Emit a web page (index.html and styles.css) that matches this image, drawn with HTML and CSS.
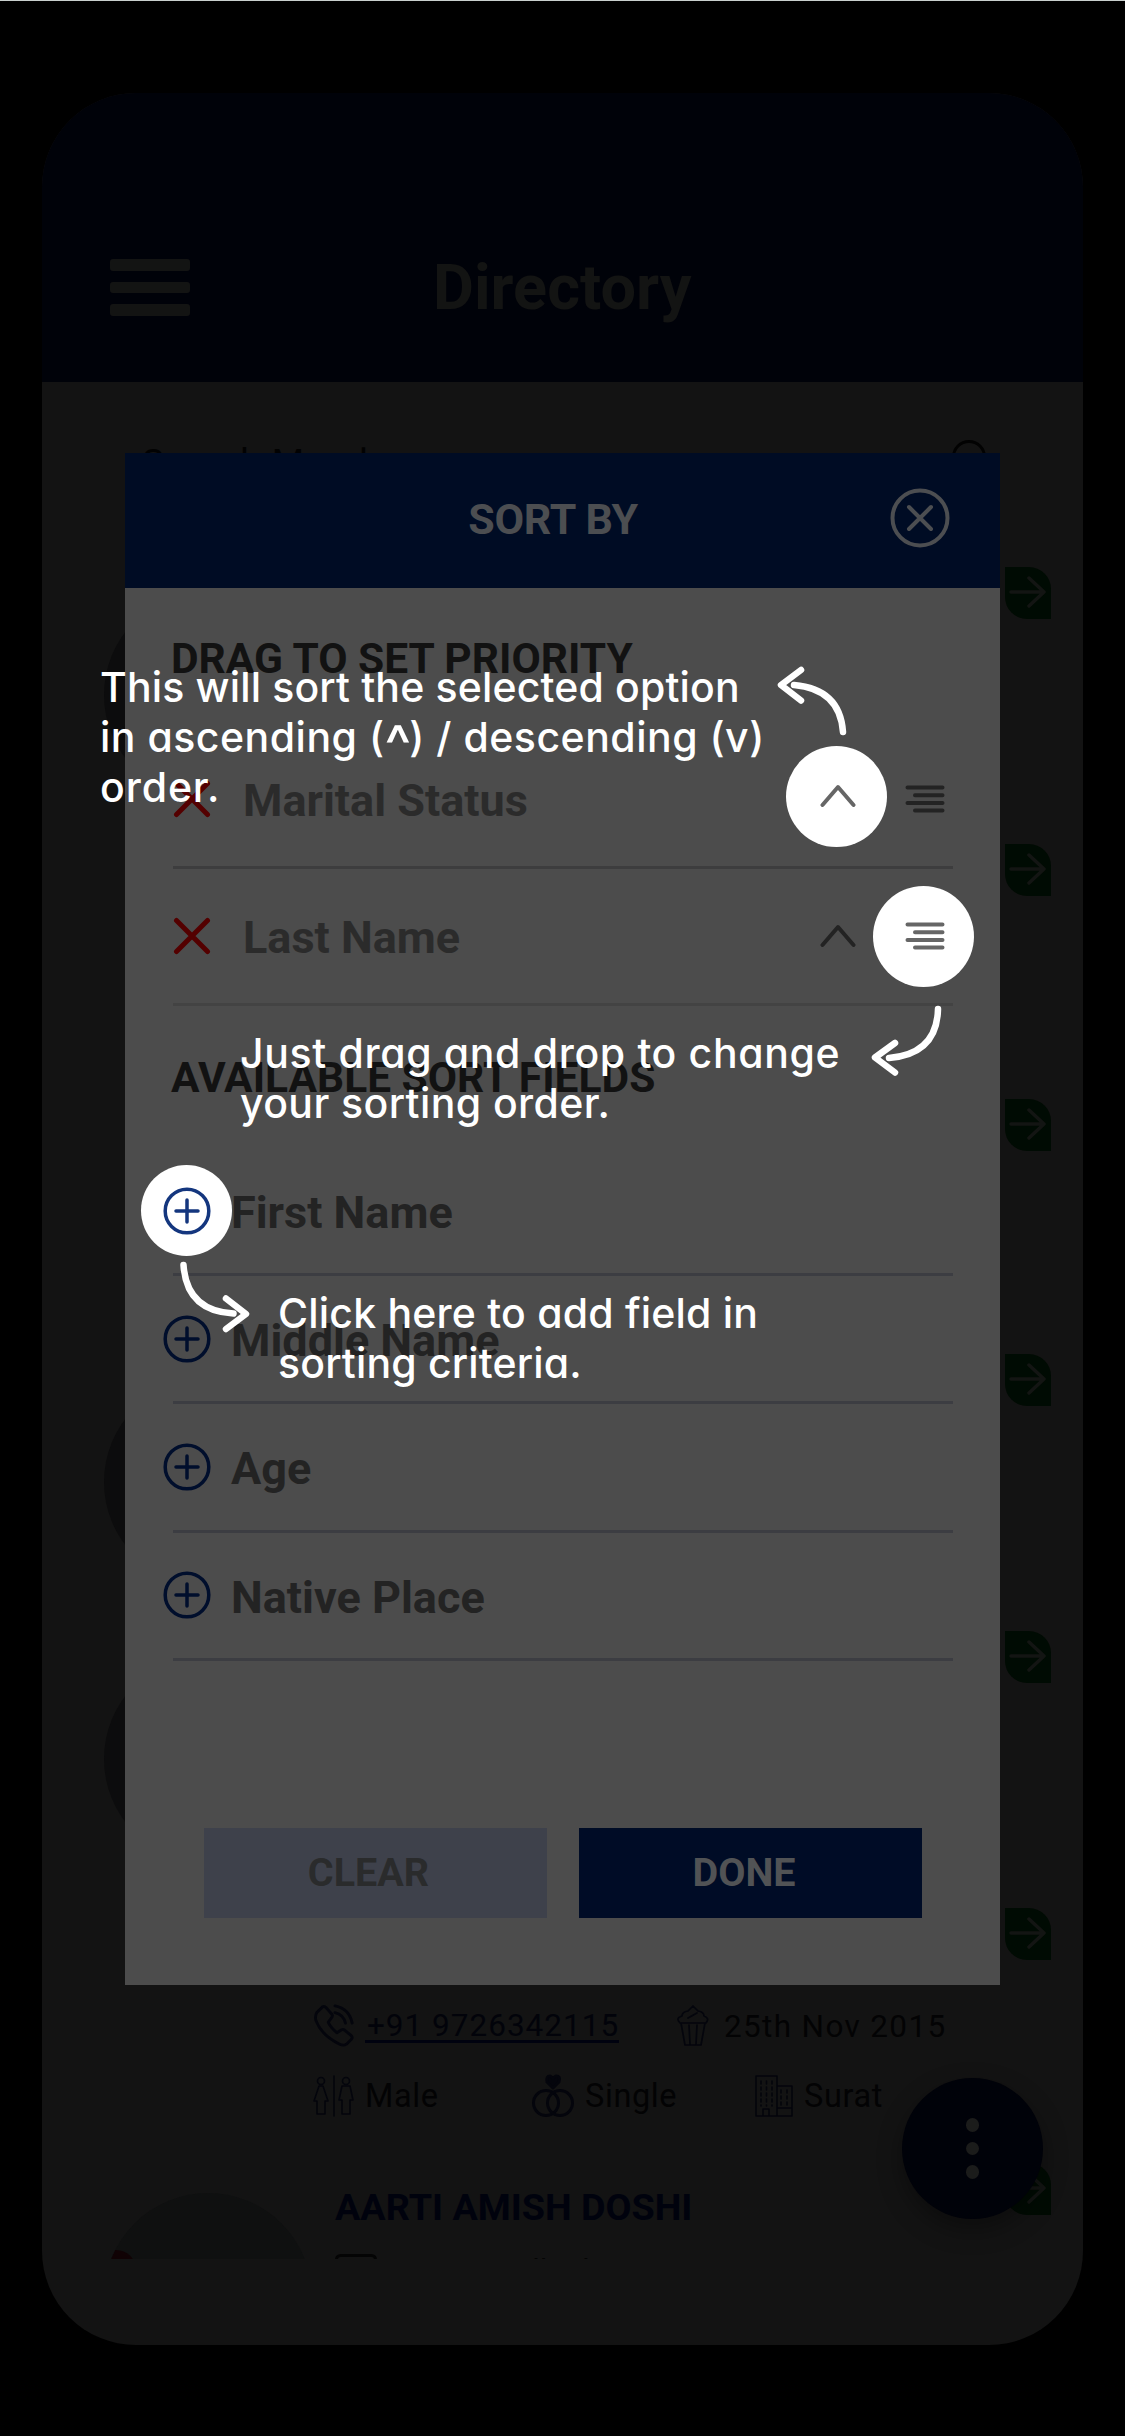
FILE: index.html
```html
<!DOCTYPE html>
<html lang="en">
<head>
<meta charset="utf-8">
<title>Directory - Sort by</title>
<link rel="stylesheet" href="styles.css">
</head>
<body>
<svg class="defs" aria-hidden="true">
  <symbol id="plus" viewBox="0 0 48 48"><circle cx="24" cy="24" r="21.8"/><path d="M24 13v22M13 24h22"/></symbol>
  <symbol id="cross" viewBox="0 0 38 38"><path d="M3.5 3.5l31 31M34.5 3.5l-31 31"/></symbol>
  <symbol id="up" viewBox="0 0 36 24"><path d="M2.5 21L18 3l15.500 18"/></symbol>
  <symbol id="lines" viewBox="0 0 40 28"><path d="M2.500 2.500h35M10 10.200h27.500M2.500 17.900h35M10 25.600h27.500"/></symbol>
  <symbol id="go" viewBox="0 0 46 52"><path d="M6 25h33M24 11l15 14-15 14"/></symbol>
</svg>
<div class="screen">
  <div class="phone">
    <header class="appbar">
      <span class="menu"><i></i><i></i><i></i></span>
      <h1>Directory</h1>
    </header>
    <div class="search"><span>Search Member</span>
      <svg class="glass" viewBox="0 0 42 42"><circle cx="18" cy="18" r="15.500"/><path d="M29 29l10 10"/></svg>
    </div>
    <main class="list">
      <section class="card"><span class="photo"></span><svg class="go"><use href="#go"/></svg></section>
      <section class="card short"><svg class="go"><use href="#go"/></svg></section>
      <section class="card short"><svg class="go"><use href="#go"/></svg></section>
      <section class="card"><span class="photo"></span><svg class="go"><use href="#go"/></svg></section>
      <section class="card"><span class="photo"></span><svg class="go"><use href="#go"/></svg></section>
      <section class="card short details">
        <svg class="go"><use href="#go"/></svg>
        <div class="row first">
          <svg class="ic" viewBox="0 0 42 46"><path d="M3 9l6-6q2-1 4 1l6 7q1 2-1 4l-3 4q2 5 9 11l5-3q2-1 4 1l6 5q2 2 0 4l-5 5q-3 2-7 0Q8 33 2 17q-1-5 1-8zM22 2q15 3 18 18M22 9q9 2 11 11"/></svg>
          <a class="tel">+91 9726342115</a>
          <svg class="ic cake" viewBox="0 0 34 42"><path d="M5 18l4 22h16l4-22M13 20l1 19M21 20l-1 19M4 18q-5-5 2-7 0-4 6-5l5-5 5 5q6 1 6 5 6 2 2 7zM12 13l9-5"/></svg>
          <span class="date">25th Nov 2015</span>
        </div>
        <div class="row second">
          <svg class="ic thin" viewBox="0 0 42 42"><circle cx="8" cy="6" r="3.500"/><path d="M6 11h4l5 15h-3v13H4V26H1zM21 1v40"/><circle cx="33" cy="6" r="3.500"/><path d="M29 11h8l3 14h-3v14h-8V25h-3z"/></svg>
          <span class="male">Male</span>
          <svg class="ic" viewBox="0 0 42 44"><circle cx="14" cy="29" r="12.500"/><circle cx="28" cy="29" r="12.500"/><path class="heart" d="M21 14l-6-6q-1-6 3-6l3 2 3-2q5 0 3 6z"/></svg>
          <span class="single">Single</span>
          <svg class="ic thin" viewBox="0 0 40 44"><path d="M2 42V2h21v40zM23 12h15v30H23M9 42v-7h6v7M23 34h15"/><path stroke-dasharray="3 3" d="M7 7v25M12.500 7v25M18 7v25M27 16v15M33 16v15"/></svg>
          <span class="city">Surat</span>
        </div>
      </section>
      <section class="card last">
        <svg class="go"><use href="#go"/></svg>
        <span class="photo"><i></i></span>
        <h2>AARTI AMISH DOSHI</h2>
        <div class="mail"><svg class="ic" viewBox="0 0 42 34"><rect x="1.500" y="1.500" width="39" height="30" rx="4"/></svg><span>aarti@swillindia.in</span></div>
      </section>
    </main>
    <span class="fab"><i></i><i></i><i></i></span>
  </div>

  <div class="modal">
    <header class="modal-head">
      <span>SORT BY</span>
      <svg class="close" viewBox="0 0 60 60"><circle cx="30" cy="30" r="27.500"/><path d="M19 19l22 22M41 19L19 41"/></svg>
    </header>
    <div class="modal-body">
      <h3>DRAG TO SET PRIORITY</h3>
      <div class="chosen">
        <div class="pick"><svg class="x"><use href="#cross"/></svg><span>Marital Status</span><b class="spot raised"><svg class="up"><use href="#up"/></svg></b><b><svg class="lines"><use href="#lines"/></svg></b></div>
        <div class="pick faint"><svg class="x"><use href="#cross"/></svg><span>Last Name</span><b><svg class="up"><use href="#up"/></svg></b><b class="spot"><svg class="lines"><use href="#lines"/></svg></b></div>
      </div>
      <h3 class="avail">AVAILABLE SORT FIELDS</h3>
      <div class="fields">
        <div class="field"><b class="spot"><svg><use href="#plus"/></svg></b><span>First Name</span></div>
        <div class="field"><b><svg><use href="#plus"/></svg></b><span>Middle Name</span></div>
        <div class="field"><b><svg><use href="#plus"/></svg></b><span>Age</span></div>
        <div class="field"><b><svg><use href="#plus"/></svg></b><span>Native Place</span></div>
      </div>
      <div class="actions"><button class="clear">CLEAR</button><button class="done">DONE</button></div>
    </div>
  </div>

  <p class="tip tip-sort"><span class="l1">This will sort the selected option</span><span class="l2">in ascending (<em>^</em>) / descending (v)</span><span class="l3">order.</span></p>
  <svg class="arrow a1" viewBox="770 660 84 84"><path d="M801 670l-20 15 20 15.500M794 685q46 4 49 47" /></svg>
  <p class="tip tip-drag"><span class="l4">Just drag and drop to change</span><span class="l5">your sorting order.</span></p>
  <svg class="arrow a2" viewBox="866 1000 84 84"><path d="M895 1043l-20 14.500 20 15M938 1009q-1 45-49 49"/></svg>
  <p class="tip tip-add"><span class="l6">Click here to add field in</span><span class="l7">sorting criteria.</span></p>
  <svg class="arrow a3" viewBox="176 1256 84 84"><path d="M226 1298.500l20 15.500-20 15M183.500 1265q3 46 50 48.500"/></svg>
</div>
</body>
</html>
```
FILE: styles.css
```css
* { box-sizing: border-box; }
body { margin: 0; background: #000; font-family: Roboto, "Liberation Sans", sans-serif; }
h1, h2, h3, p { margin: 0; }
svg { display: block; fill: none; stroke: currentColor; stroke-linecap: round; stroke-linejoin: round; }
.defs { position: absolute; width: 0; height: 0; }
.screen { position: relative; width: 1125px; height: 2436px; padding: 92px 42px 0; border-top: 1px solid #c9d0ce; overflow: hidden; }

/* dimmed page behind the dialog */
.phone { position: relative; height: 2252px; border-radius: 94px; background: #131313; overflow: hidden; }
.appbar { height: 289px; background: #000209; color: #131413; display: flex; align-items: flex-start; padding: 166px 0 0 68px; }
.menu { display: grid; gap: 11px; width: 80px; }
.menu i { height: 11.500px; border-radius: 3px; background: currentColor; }
h1 { margin: -11px 0 0 243px; font-size: 63px; line-height: 80px; font-weight: 700; white-space: nowrap; }
.search { display: flex; justify-content: space-between; align-items: flex-start; height: 185px; padding: 56px 88px 0 100px; color: #020202; font-size: 37px; line-height: 50px; letter-spacing: 1px; }
.glass { width: 42px; height: 42px; stroke-width: 3; margin: 1px 2px 0 0; }
.list { height: 1692px; overflow: hidden; }
.card { position: relative; height: 254px; margin: 0 25px 23px; border-radius: 20px; }
.card.short { margin-bottom: 1px; }
.go { position: absolute; right: 7px; top: 0; width: 46px; height: 52px; background: #000b03; border-radius: 0 22px 0 22px; color: #131513; stroke-width: 3.500; }
.photo { position: absolute; left: 37px; top: 24px; width: 208px; height: 208px; border-radius: 50%; background: #0c0c0d; }
.details { padding: 86px 0 0 246px; color: #030304; font-size: 31.500px; height: 254px; }
.row { display: flex; align-items: center; }
.row .ic { width: 42px; height: 44px; color: #04050c; stroke-width: 3; flex: none; }
.row .ic.thin { stroke-width: 1.600; }
.heart { fill: currentColor; }
.row .ic.cake { width: 34px; height: 42px; stroke-width: 1.700; margin-left: 57px; }
.first { height: 64px; }
.tel { margin: 2px 0 0 10px; padding-left: 2px; width: 254px; color: #02030a; letter-spacing: 1px; border-bottom: 3px solid #00020f; line-height: 29px; white-space: nowrap; }
.date { margin-left: 14px; letter-spacing: 1.350px; white-space: nowrap; }
.second { height: 76px; }
.male { width: 167px; margin-left: 10px; }
.single { width: 168px; margin-left: 11px; }
.city { margin-left: 9px; }
.second { font-size: 32.500px; letter-spacing: .6px; }
.last { overflow: hidden; height: 300px; }
.last .photo { top: 30px; background: #0f1010; overflow: hidden; }
.last .photo i { display: block; width: 27px; height: 24px; margin: 57px 0 0 5px; border-radius: 0 20px 0 0; background: #100204; }
h2 { margin: 21px 0 0 268px; font-size: 37.700px; line-height: 46px; color: #00020d; }
.mail { display: flex; margin: 24px 0 0 268px; color: #040404; font-size: 31px; line-height: 34px; gap: 18px; }
.mail .ic { width: 42px; height: 34px; stroke-width: 3; }
.fab { position: absolute; left: 860px; top: 1985px; width: 141px; height: 141px; border-radius: 50%; background: #000209; box-shadow: 0 10px 24px rgba(0,0,0,.35); display: flex; flex-direction: column; align-items: center; justify-content: center; gap: 10px; }
.fab i { width: 13.500px; height: 13.500px; border-radius: 50%; background: #1b1c1b; }

/* sort dialog */
.modal { position: absolute; left: 125px; top: 452px; width: 875px; height: 1532px; background: #4c4c4c; }
.modal-head { position: relative; height: 135px; background: #000c24; color: #4c4e51; display: flex; align-items: center; justify-content: center; font-size: 43px; font-weight: 700; }
.modal-head span { margin: 0 19px 4px 0; letter-spacing: -.3px; }
.close { position: absolute; right: 50px; top: 35px; width: 60px; height: 60px; stroke-width: 4; }
.modal-body { padding: 45px 46px 0; }
h3 { font-size: 42.500px; line-height: 52px; font-weight: 700; color: #121212; white-space: nowrap; }
.chosen { padding-top: 47px; }
.pick { display: flex; align-items: center; height: 137px; border-bottom: 3px solid #3d3d3e; margin: 0 0 0 2px; width: 780px; font-size: 45px; font-weight: 700; color: #2b2b2b; }
.pick.faint { border-bottom-color: #434343; }
.x { width: 38px; height: 38px; color: #540000; stroke-width: 5; }
.pick span { margin-left: 32px; padding-top: 3px; flex: 1; }
.pick b { width: 101px; height: 101px; margin: 0 -14px 0 0; display: grid; place-items: center; border-radius: 50%; flex: none; color: #232323; }
.pick b:last-child { margin-right: -21px; }
.pick b.raised { margin-top: -6px; }
.pick b svg { margin-left: 3px; }
.spot { background: #fff; }
.pick .spot { color: #666; }
.up { width: 36px; height: 24px; stroke-width: 4; }
.lines { width: 40px; height: 28px; stroke-width: 4; }
.avail { padding-top: 46px; }
.fields { padding-top: 44px; }
.field { display: flex; align-items: center; height: 128.200px; color: #232323; font-size: 45px; font-weight: 700; border-bottom: 3px solid #3c3d42; width: 780px; margin-left: 2px; }
.field span { padding-top: 4px; margin-left: -1px; }
.field b { width: 91px; height: 91px; border-radius: 50%; display: grid; place-items: center; margin-left: -32px; color: #000e2c; flex: none; }
.field b svg { width: 48px; height: 48px; stroke-width: 3.500; }
.field b.spot { color: #14367e; }
.actions { display: flex; gap: 32px; padding: 167px 0 0 33px; }
button { width: 343px; height: 90px; border: 0; font: 700 39.500px Roboto, sans-serif; padding: 0; }
.clear { background: #3e414b; color: #2a2b2c; padding-right: 14px; }
.done { background: #000c26; color: #515355; padding-right: 13px; }

/* coach marks */
.tip { position: absolute; color: #fff; font: 500 41px/50px Inter, "Open Sans", sans-serif; font-feature-settings: "cv11"; white-space: nowrap; }
.tip span { display: block; }
.tip em { font-style: normal; font-size: 56px; line-height: 0; vertical-align: -13px; letter-spacing: -2px; }
.tip-sort { left: 100px; top: 661px; }
.l1 { letter-spacing: .15px; }
.l2 { letter-spacing: .5px; }
.l3 { letter-spacing: .9px; }
.tip-drag { left: 240px; top: 1027px; }
.l4 { letter-spacing: .65px; }
.l5 { letter-spacing: .4px; }
.tip-add { left: 278px; top: 1287px; }
.l6 { letter-spacing: .2px; }
.l7 { letter-spacing: .15px; }
.arrow { position: absolute; width: 84px; height: 84px; color: #fff; stroke-width: 6.500; }
.a1 { left: 770px; top: 659px; }
.a2 { left: 866px; top: 999px; }
.a3 { left: 176px; top: 1255px; }
```
